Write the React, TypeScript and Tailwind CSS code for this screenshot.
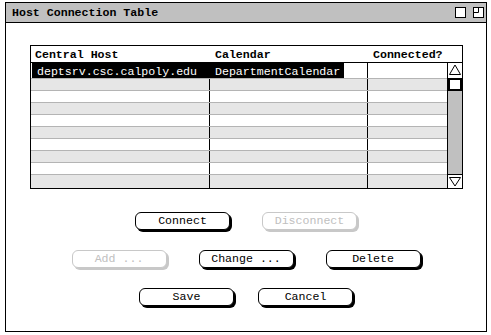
import React from "react";

const mono = { fontFamily: '"Liberation Mono", "DejaVu Sans Mono", monospace' };

function Btn({ label, disabled }: { label: string; disabled?: boolean }) {
  return (
    <button
      className={
        disabled
          ? "w-[95px] h-[18px] rounded-[6px] border border-[#c8c8c8] text-[#c0c0c0] shadow-[2px_2px_0_#c8c8c8] bg-white text-[11.6px] leading-none flex items-center justify-center"
          : "w-[95px] h-[18px] rounded-[6px] border border-black text-black shadow-[2px_2px_0_#000] bg-white text-[11.6px] leading-none flex items-center justify-center"
      }
    >
      {label}
    </button>
  );
}

function UpArrow() {
  return (
    <svg width="14" height="14" viewBox="0 0 14 14">
      <polygon points="7,2 1.5,11.5 12.5,11.5" fill="none" stroke="#000" strokeWidth="1" />
    </svg>
  );
}

function DownArrow() {
  return (
    <svg width="14" height="13" viewBox="0 0 14 13">
      <polygon points="1.5,2.5 12.5,2.5 7,11" fill="none" stroke="#000" strokeWidth="1" />
    </svg>
  );
}

export default function App() {
  const rows = [1, 2, 3, 4, 5, 6, 7, 8, 9];

  return (
    <div className="w-[491px] h-[335px] bg-white pt-[2px] pl-[5px]" style={mono}>
      <div className="w-[482px] h-[330px] border border-black flex flex-col">
        {/* title bar */}
        <div className="h-[20px] bg-[#c0c0c0] border-b border-black flex items-center pl-[6px] pr-[2px]">
          <span className="text-[11.6px] font-bold text-black flex-1">Host Connection Table</span>
          <div className="flex gap-[7px]">
            <svg width="11" height="11" viewBox="0 0 11 11">
              <rect x="0.5" y="0.5" width="10" height="10" fill="#fff" stroke="#000" />
            </svg>
            <svg width="11" height="11" viewBox="0 0 11 11">
              <rect x="0.5" y="0.5" width="10" height="10" fill="#fff" stroke="#000" />
              <path d="M0.5 5.5 H5.5 V0.5" fill="none" stroke="#000" />
            </svg>
          </div>
        </div>

        {/* table */}
        <div className="ml-[24px] mt-[22px] w-[433px] h-[144px] border border-black flex flex-col text-[11.6px]">
          <div className="h-[17px] border-b border-black grid grid-cols-[179px_158px_1fr] font-bold items-center">
            <div className="pl-[4px]">Central Host</div>
            <div className="pl-[5px]">Calendar</div>
            <div className="pl-[5px]">Connected?</div>
          </div>
          <div className="flex flex-1">
            <div className="w-[416px] flex flex-col">
              <div className="h-[15px] grid grid-cols-[179px_158px_79px] bg-white">
                <div className="pl-[1px] h-full">
                  <div className="h-full bg-black text-white pl-[5px] flex items-center">deptsrv.csc.calpoly.edu</div>
                </div>
                <div className="h-full border-r border-black">
                  <div className="h-full bg-black text-white pl-[5px] w-[134px] flex items-center">DepartmentCalendar</div>
                </div>
                <div />
              </div>
              {rows.map((r) => (
                <div
                  key={r}
                  className={
                    "grid grid-cols-[179px_158px_79px] border-t border-[#b4b4b4] " +
                    (r === 9 ? "flex-1 " : "h-[12px] ") +
                    (r % 2 === 1 ? "bg-[#e6e6e6]" : "bg-white")
                  }
                >
                  <div className="border-r border-black" />
                  <div className="border-r border-black" />
                  <div />
                </div>
              ))}
            </div>
            <div className="w-[15px] border-l border-black flex flex-col bg-[#c0c0c0]">
              <div className="h-[15px] bg-white flex items-start justify-center">
                <UpArrow />
              </div>
              <div className="h-[13px] bg-white border-2 border-black" />
              <div className="flex-1" />
              <div className="h-[14px] bg-white border-t border-black flex items-start justify-center">
                <DownArrow />
              </div>
            </div>
          </div>
        </div>

        {/* buttons */}
        <div className="mt-[23px] flex flex-col items-center gap-[20px]">
          <div className="flex gap-[32px]">
            <Btn label="Connect" />
            <Btn label="Disconnect" disabled />
          </div>
          <div className="flex gap-[32px]">
            <Btn label="Add ..." disabled />
            <Btn label="Change ..." />
            <Btn label="Delete" />
          </div>
          <div className="flex gap-[24px]">
            <Btn label="Save" />
            <Btn label="Cancel" />
          </div>
        </div>
      </div>
    </div>
  );
}
